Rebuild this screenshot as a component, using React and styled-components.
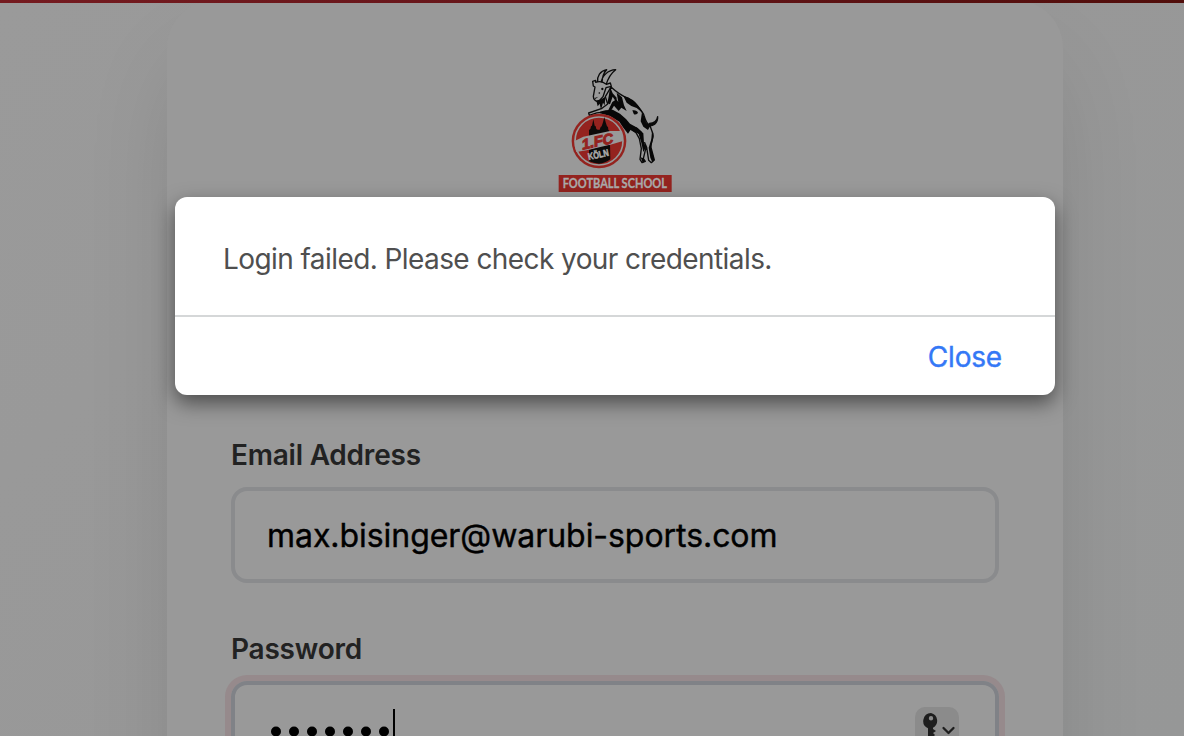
import React from "react";
import styled, { createGlobalStyle } from "styled-components";

const GlobalStyle = createGlobalStyle`
  * { box-sizing: border-box; }
  body {
    margin: 0;
    overflow: hidden;
    font-family: Inter, "Liberation Sans", sans-serif;
    background: #979898;
  }
`;

const Page = styled.main`
  position: relative;
  height: 736px;
  overflow: hidden;
  background: linear-gradient(135deg, #9a9a9a 0%, #989898 50%, #969797 100%);
`;

const TopBar = styled.div`
  position: relative;
  z-index: 1;
  height: 3px;
  background: linear-gradient(90deg, #751b20, #641519 50%, #510e0b);
`;

const Card = styled.section`
  width: 896px;
  height: 1300px;
  margin: -3px 0 0 167px;
  padding: 60px 64px 0;
  border-radius: 48px;
  background: #999;
  box-shadow: 0 50px 100px -24px rgba(0, 0, 0, 0.17);
`;

const LogoArea = styled.div`
  display: flex;
  justify-content: center;
  height: 377px;
`;

const Field = styled.div`
  display: flex;
  flex-direction: column;
  gap: 14px;
  height: 194px;
`;

const Label = styled.label`
  height: 36px;
  line-height: 36px;
  font-size: 28px;
  font-weight: 600;
  letter-spacing: -0.22px;
  color: #222;
`;

const InputBox = styled.div`
  display: flex;
  align-items: center;
  justify-content: space-between;
  height: 96px;
  padding: 0 36px 0 32px;
  border: 4px solid ${(p) => (p.$focused ? "#808287" : "#8a8b8d")};
  border-radius: 16px;
  box-shadow: ${(p) => (p.$focused ? "0 0 0 6px #968a8c" : "none")};
`;

const Value = styled.span`
  font-size: 32px;
  letter-spacing: -0.05px;
  -webkit-text-stroke: 0.4px #000;
  color: #000;
`;

const Secret = styled.div`
  display: flex;
  align-items: center;
  gap: 8px;
  height: 44px;
  margin-top: 4px;
  padding-left: 4px;
`;

const Dot = styled.i`
  width: 10px;
  height: 10px;
  border-radius: 50%;
  background: #000;
  transform: translateY(0.5px);
`;

const Caret = styled.i`
  width: 2px;
  height: 44px;
  margin-left: -4px;
  background: #000;
`;

const KeyButton = styled.div`
  width: 44px;
  height: 44px;
  border-radius: 10px;
  background: #8b8b8b;
`;

const Dialog = styled.div`
  position: absolute;
  z-index: 2;
  top: 197px;
  left: 175px;
  width: 880px;
  height: 198px;
  border-radius: 12px;
  background: #fff;
  box-shadow: 0 8px 20px rgba(0, 0, 0, 0.5);
`;

const Message = styled.p`
  height: 120px;
  margin: 0;
  padding: 44px 48px 0;
  border-bottom: 2px solid #d5d7d8;
  line-height: 36px;
  font-size: 28px;
  letter-spacing: -0.58px;
  color: #4f4f4f;
`;

const Actions = styled.div`
  display: flex;
  justify-content: flex-end;
  padding: 22px 53px 0 0;
`;

const CloseButton = styled.button`
  padding: 0;
  border: 0;
  background: none;
  font: 400 28px/36px Inter, sans-serif;
  letter-spacing: -0.2px;
  -webkit-text-stroke: 0.4px #3478f6;
  color: #3478f6;
`;

function ClubLogo() {
  return (
    <svg width="130" height="140" viewBox="0 0 390 420">
      <g stroke="#0b0b0b" strokeLinejoin="round" strokeLinecap="round">
        <path
          d="M143 66C141 49 150 33 170 29C160 39 157 49 156 66M153 70C155 48 174 30 197 29C181 41 174 54 168 75"
          fill="#999"
          strokeWidth="4"
        />
        <path
          d="M137 61L128 64L130 78L135 81L130 109Q131 121 141 124L150 120L159 110L168 83L184 79L181 69L169 73Q155 61 137 67Z"
          fill="#999"
          strokeWidth="4"
        />
        <path
          d="M183 81C198 95 216 108 235 115C254 128 267 139 281 163C285 176 287 190 300 197L309 222C310 240 301 250 303 262L313 300L304 308L296 301L290 262L284 248L288 262L280 296L286 304L276 308L270 298L274 266L268 236L258 218L236 204L224 196L206 174L180 158Q150 152 118 166L116 159L156 145L173 132L166 110Z"
          fill="#999"
          strokeWidth="4"
        />
        <path d="M298 190Q320 190 323 170Q324 184 314 193Q308 198 298 198Z" fill="#0b0b0b" strokeWidth="4" />
      </g>
      <g fill="#070707">
        <path d="M139 122l4 17 6-8 4 18 6-21 5 8 2-26-12 8z" />
        <path d="M180 80l8 20 12 13-1 14-11-17-8 23-8-3 5-26z" />
        <path d="M200 98l16 14 6 24 8 17-16-10-8 10-14-16-9 15-8-2 12-24 12-8 6 8z" />
        <path d="M220 108q31 8 44 28l18 26-22-18-16-6-14-10z" />
        <path d="M150 155q14-6 38-6l22 12 18 16 12 14 22 12 14 13-3 8-31-15-8 12-14-18-12-18-28-17-30-8z" />
        <path d="M247 151q14-2 17 8-9 8-13 2z" />
        <path d="M276 156q12 22 12 32l14 8-8 14-14-10-8-16z" />
        <path d="M240 200q18-2 28 9l12 11 2 28 6 14-8 14-6-28-8-26-13-10z" />
        <path d="M306 214l5 14-5 22-3 12 6 22 4 15-6 8-6-14-5-30 8-26zM272 292l8 3 6 9-8 4z" />
        <circle cx="157" cy="87" r="3.5" />
        <circle cx="148" cy="99" r="2.5" />
        <path d="M134 114l11-4-9 7z" />
      </g>
      <circle cx="147" cy="243" r="82" fill="#94231f" />
      <circle cx="147" cy="243" r="72" fill="none" stroke="#999" strokeWidth="5" />
      <path
        d="M117 240V210l4-3 2-8 3-2 4-19 4 19 3 2 2 8 4 2h6l3-8 3-2 4-12 4-16 4 16 4 12 3 2 1 8 3 3v30z"
        fill="#0c0a09"
      />
      <path d="M117 270L180 250L181 298Q166 310 147 311Q130 310 117 304Z" fill="#0c0a09" />
      <path d="M74 243L100 230L180 213L214 213L219 243L186 253L110 271L79 276Q73 260 74 243Z" fill="#999" />
      <text
        x="0" y="0" transform="translate(96 269) rotate(-12) skewX(-12)"
        fill="#94231f" stroke="#94231f" strokeWidth="3"
        fontFamily="Liberation Sans, sans-serif" fontSize="43" fontWeight="700"
        textLength="96" lengthAdjust="spacingAndGlyphs"
      >1.FC</text>
      <text
        x="0" y="0" transform="translate(116 300) rotate(-12)"
        fill="#aaa" stroke="#aaa" strokeWidth="1.6"
        fontFamily="Liberation Sans, sans-serif" fontSize="29" fontWeight="700"
        textLength="63" lengthAdjust="spacingAndGlyphs"
      >KÖLN</text>
      <rect x="26" y="345" width="339" height="51" fill="#94231f" />
      <text
        x="38" y="385" fill="#aaa" stroke="#aaa" strokeWidth="1"
        fontFamily="Lato, sans-serif" fontSize="41" fontWeight="700"
        textLength="313" lengthAdjust="spacingAndGlyphs"
      >FOOTBALL SCHOOL</text>
    </svg>
  );
}

function KeyIcon() {
  return (
    <svg width="44" height="44" viewBox="0 0 44 44">
      <path
        fillRule="evenodd"
        d="M16 6a8 8 0 0 0-3 15.3V33l3 3 4-4-2-2 2-2-2-2 3-2-3-2v-1.2A8 8 0 0 0 16 6Zm0 3a2.2 2.2 0 1 1 0 4.4A2.2 2.2 0 0 1 16 9Z"
        fill="#1e1e1e"
      />
      <path d="M28.500 21l5 5 5-5" fill="none" stroke="#1e1e1e" strokeWidth="2.3" strokeLinecap="round" strokeLinejoin="round" />
    </svg>
  );
}

export default function App() {
  return (
    <>
      <GlobalStyle />
      <Page>
        <TopBar />
        <Card>
          <LogoArea>
            <ClubLogo />
          </LogoArea>
          <Field>
            <Label>Email Address</Label>
            <InputBox>
              <Value>max.bisinger@warubi-sports.com</Value>
            </InputBox>
          </Field>
          <Field>
            <Label>Password</Label>
            <InputBox $focused>
              <Secret>
                {Array.from({ length: 7 }, (_, i) => (
                  <Dot key={i} />
                ))}
                <Caret />
              </Secret>
              <KeyButton>
                <KeyIcon />
              </KeyButton>
            </InputBox>
          </Field>
        </Card>
        <Dialog role="dialog">
          <Message>Login failed. Please check your credentials.</Message>
          <Actions>
            <CloseButton>Close</CloseButton>
          </Actions>
        </Dialog>
      </Page>
    </>
  );
}
